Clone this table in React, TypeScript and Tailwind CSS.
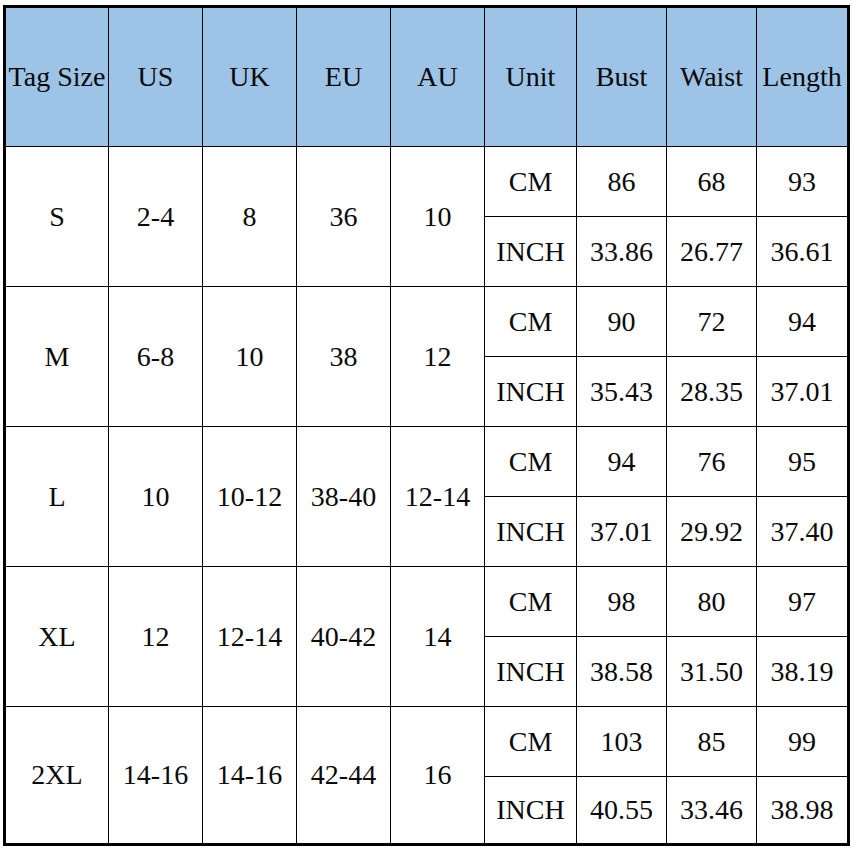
const headers = ["Tag Size", "US", "UK", "EU", "AU", "Unit", "Bust", "Waist", "Length"];

const sizes = [
  { tag: "S", us: "2-4", uk: "8", eu: "36", au: "10", cm: ["86", "68", "93"], inch: ["33.86", "26.77", "36.61"] },
  { tag: "M", us: "6-8", uk: "10", eu: "38", au: "12", cm: ["90", "72", "94"], inch: ["35.43", "28.35", "37.01"] },
  { tag: "L", us: "10", uk: "10-12", eu: "38-40", au: "12-14", cm: ["94", "76", "95"], inch: ["37.01", "29.92", "37.40"] },
  { tag: "XL", us: "12", uk: "12-14", eu: "40-42", au: "14", cm: ["98", "80", "97"], inch: ["38.58", "31.50", "38.19"] },
  { tag: "2XL", us: "14-16", uk: "14-16", eu: "42-44", au: "16", cm: ["103", "85", "99"], inch: ["40.55", "33.46", "38.98"] },
];

function Cell({ children, span, head }: { children: React.ReactNode; span?: boolean; head?: boolean }) {
  return (
    <div
      className={`flex items-center justify-center whitespace-nowrap ${span ? "row-span-2" : ""} ${
        head ? "bg-[#9dc3e6]" : "bg-white"
      }`}
    >
      {children}
    </div>
  );
}

export default function App() {
  return (
    <div className="h-[853px] w-[853px] bg-white pl-[3px] pt-[5px]">
      <div
        className="inline-block border-[3px] border-black bg-black text-[28px] text-[#0a0a0a]"
        style={{ fontFamily: '"Liberation Serif", "DejaVu Serif", serif' }}
      >
        <div className="grid grid-cols-[102px_93px_93px_93px_93px_91px_89px_89px_90px] grid-rows-[138px_repeat(9,69px)_66px] gap-px">
          {headers.map((h) => (
            <Cell key={h} head>
              {h}
            </Cell>
          ))}
          {sizes.map((s) => (
            <>
              <Cell span>{s.tag}</Cell>
              <Cell span>{s.us}</Cell>
              <Cell span>{s.uk}</Cell>
              <Cell span>{s.eu}</Cell>
              <Cell span>{s.au}</Cell>
              <Cell>CM</Cell>
              {s.cm.map((v, i) => (
                <Cell key={"c" + i}>{v}</Cell>
              ))}
              <Cell>INCH</Cell>
              {s.inch.map((v, i) => (
                <Cell key={"i" + i}>{v}</Cell>
              ))}
            </>
          ))}
        </div>
      </div>
    </div>
  );
}
